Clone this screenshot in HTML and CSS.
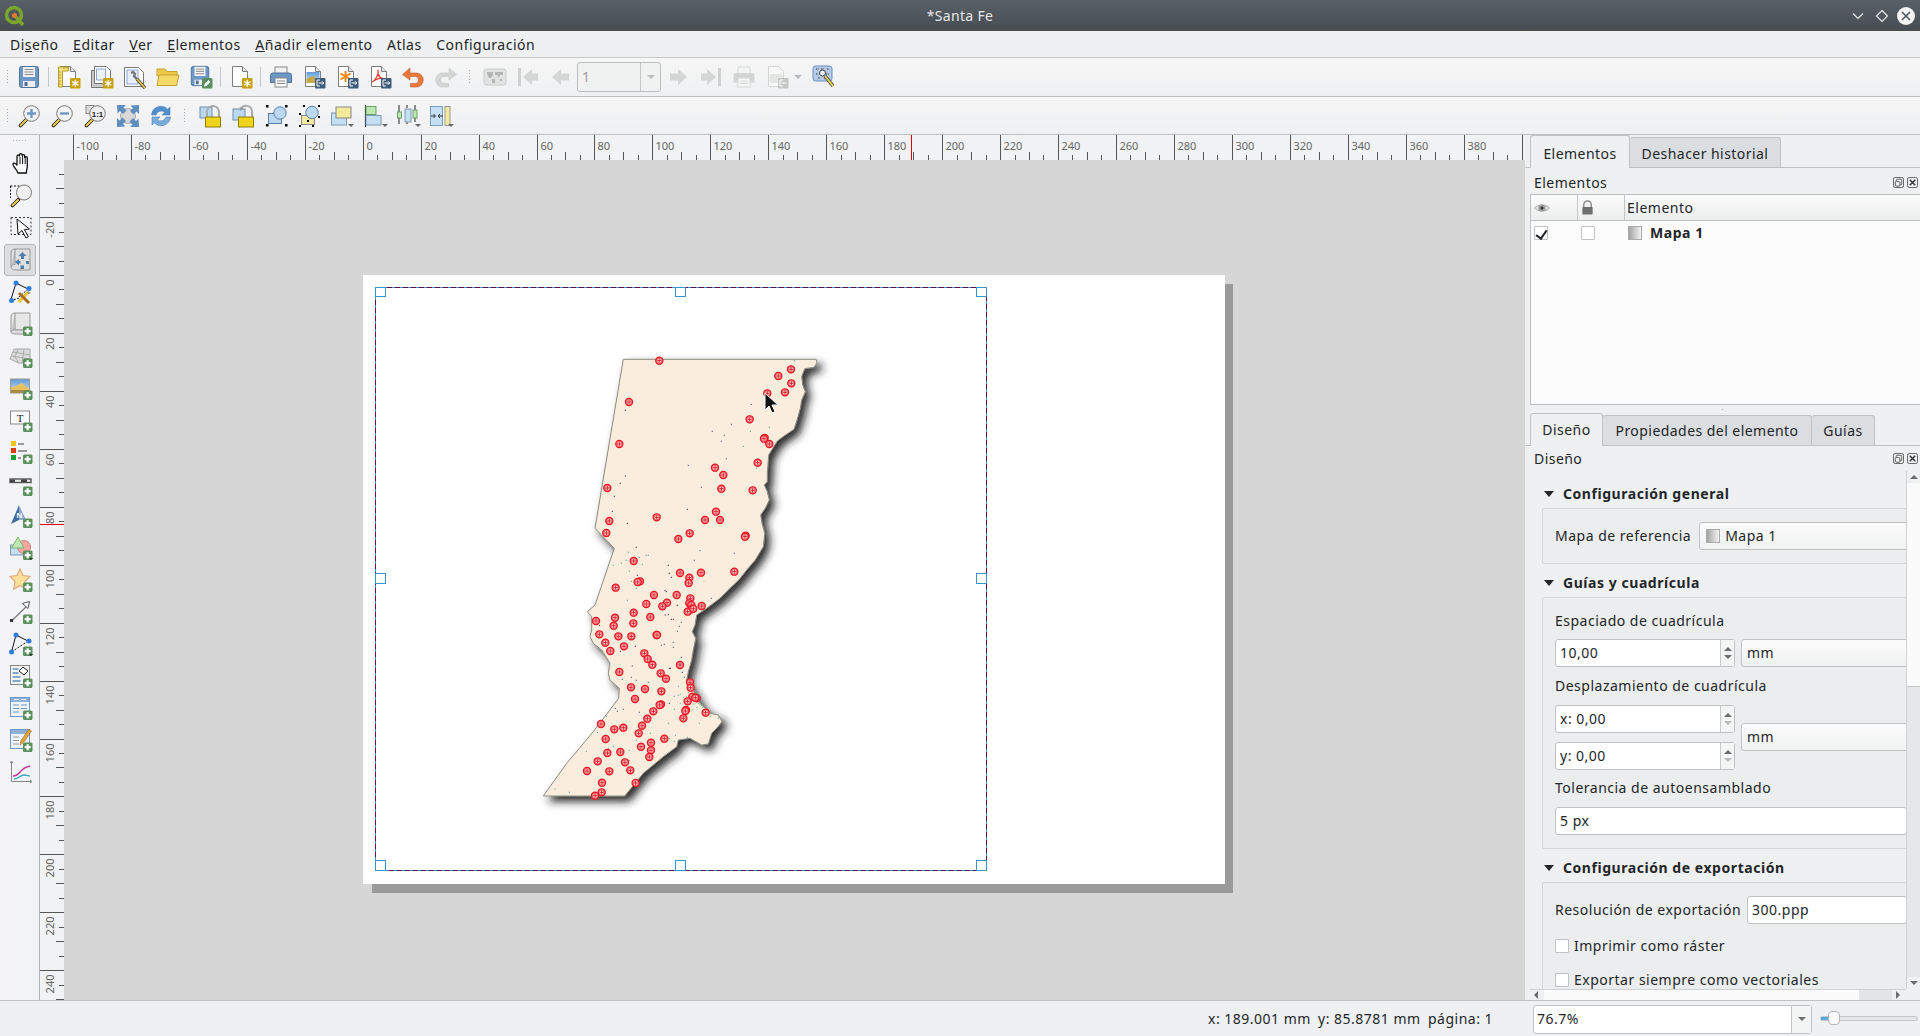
FILE: index.html
```html
<!DOCTYPE html>
<html lang="es">
<head>
<meta charset="utf-8">
<title>*Santa Fe</title>
<link rel="stylesheet" href="styles.css">
</head>
<body>
<svg class="defs" aria-hidden="true">
<defs>
<linearGradient id="g-map" x1="0" x2="1" y1="0" y2="0"><stop offset="0" stop-color="#a0a0a0"/><stop offset="1" stop-color="#f6f6f6"/></linearGradient>
<linearGradient id="g-sky" x1="0" x2="0" y1="0" y2="1"><stop offset="0" stop-color="#5f9bd8"/><stop offset="1" stop-color="#cfe0f0"/></linearGradient>
<filter id="mapshadow" x="-20%" y="-20%" width="140%" height="140%"><feDropShadow dx="5" dy="5" stdDeviation="4.500" flood-color="#1c1c1c" flood-opacity=".95"/></filter>
<g id="b-plus"><rect x="14" y="14.5" width="9.5" height="9.5" rx="1.5" fill="#5b8f5e"/><path d="M18.7 16.2v6M15.7 19.2h6" stroke="#fff" stroke-width="2.2"/></g>
<g id="b-star"><rect x="13" y="13" width="10.5" height="10.5" rx="1" fill="#c8a110"/><path d="M18.2 14.7v7.2M15 16.4l6.4 3.8M21.4 16.4l-6.4 3.8" stroke="#fff" stroke-width="1.2"/></g>
<g id="b-exp"><rect x="13" y="13" width="10.5" height="10.5" rx="1" fill="#3f5d78"/><path d="M18 15h-3v6h3M16.5 18h5M20 16.3l1.7 1.7-1.7 1.7" fill="none" stroke="#fff" stroke-width="1"/></g>
<g id="s-page"><path d="M3.5 1.5h10l5 5v15h-15z" fill="#fff" stroke="#7e7e7e"/><path d="M13.5 1.5v5h5" fill="#e4e4e4" stroke="#7e7e7e"/></g>
<g id="s-handle"><path d="M9.5 15.5l-6 6" stroke="#222" stroke-width="3.6" stroke-linecap="round"/><path d="M9 16l-5.4 5.4" stroke="#f0d050" stroke-width="2" stroke-linecap="round"/></g>
<symbol id="i-save" viewBox="0 0 24 24"><rect x="2.5" y="1.5" width="19" height="21" rx="2" fill="#6d97c4" stroke="#4c739c"/><rect x="6" y="2" width="12" height="10" fill="#f2f2f2"/><path d="M7.5 4.5h9M7.5 7h9M7.5 9.500h9" stroke="#8a8a8a"/><rect x="6" y="16" width="12" height="6" fill="#ececec"/><rect x="7.500" y="17" width="3" height="4" fill="#4d6f92"/></symbol>
<symbol id="i-saveas" viewBox="0 0 24 24"><use href="#i-save" width="22" height="22"/><rect x="13" y="13" width="10.500" height="10.500" rx="1.500" fill="#5b8f5e"/><path d="M15 21.500l.6-2.400 4-4 1.800 1.800-4 4z" fill="#fff"/></symbol>
<symbol id="i-newlayout" viewBox="0 0 24 24"><use href="#s-page"/><path d="M1.500 2h10v4h-6v16h-4z" fill="#f6e27a" stroke="#b39a30"/><path d="M2 7h2M2 10h2M2 13h2M2 16h2M2 19h2M7 2v2M10 2v2" stroke="#b39a30"/><use href="#b-star"/></symbol>
<symbol id="i-dup" viewBox="0 0 24 24"><path d="M1.500 5.500h17v17h-17z" fill="#c9c9c9" stroke="#777"/><path d="M4.500 1.500h12l4 4v13h-16z" fill="#fff" stroke="#777"/><path d="M6.500 4h9v11h-9z" fill="#eef2fa" stroke="#8ba4d0"/><use href="#b-star"/></symbol>
<symbol id="i-manager" viewBox="0 0 24 24"><path d="M1.500 2.500h14l5 5v14h-19z" fill="#fff" stroke="#777"/><path d="M4 5h11v14H4z" fill="#e8eefa" stroke="#8ba4d0"/><path d="M8 8l2-1 2 2-1 2 9 10" fill="none" stroke="#777" stroke-width="2.400"/><path d="M14 14l8 9" stroke="#333" stroke-width="3.200"/><path d="M14 14l8 9" stroke="#efcf4a" stroke-width="1.800"/></symbol>
<symbol id="i-open" viewBox="0 0 24 24"><path d="M1 4h8l2 2.500h10V11H1z" fill="#f0c84a" stroke="#c8a030"/><path d="M1 20.500L3 10h20l-2.500 10.500z" fill="#f7d968" stroke="#c8a030"/></symbol>
<symbol id="i-new" viewBox="0 0 24 24"><use href="#s-page"/><use href="#b-star"/></symbol>
<symbol id="i-print" viewBox="0 0 24 24"><rect x="6" y="2" width="12" height="7" fill="#f2f2f2" stroke="#888"/><path d="M4 8h16a2.500 2.500 0 0 1 2.500 2.500v7H1.500v-7A2.500 2.500 0 0 1 4 8z" fill="#6d97c4" stroke="#4c739c"/><rect x="6" y="13" width="12" height="9" fill="#fafafa" stroke="#888"/><path d="M8 16h8M8 18.500h8" stroke="#888"/></symbol>
<symbol id="i-ximg" viewBox="0 0 24 24"><use href="#s-page"/><rect x="4.500" y="7" width="13" height="11" fill="url(#g-sky)"/><path d="M4.500 18v-4l6-3 7 4v3z" fill="#c7a84a"/><use href="#b-exp"/></symbol>
<symbol id="i-xsvg" viewBox="0 0 24 24"><use href="#s-page"/><path d="M10.500 6v11M5.500 8.500l10 6M15.500 8.500l-10 6" stroke="#f08a1c" stroke-width="2"/><use href="#b-exp"/></symbol>
<symbol id="i-xpdf" viewBox="0 0 24 24"><use href="#s-page"/><path d="M10 5c1 4-2 10-6 12 4-3 10-5 12-3-3 1-7-4-6-9z" fill="none" stroke="#e23b2e" stroke-width="1.300"/><use href="#b-exp"/></symbol>
<symbol id="i-undo" viewBox="0 0 24 24"><path d="M9 3L1.500 9.500 9 15v-3.500h5a3.500 3.500 0 0 1 0 7H9.500V22H15a7 7 0 0 0 .5-14H9z" fill="#e9773b" stroke="#b9602f" stroke-width=".6"/></symbol>
<symbol id="i-redo" viewBox="0 0 24 24"><path d="M15 3l7.500 6.500L15 15v-3.500h-5a3.500 3.500 0 0 0 0 7h4.500V22H9A7 7 0 0 1 8.500 8H15z" fill="#d4d6d6" stroke="#c4c6c6" stroke-width=".6"/></symbol>
<symbol id="i-atlas" viewBox="0 0 24 24"><rect x="1" y="4" width="22" height="16" rx="2.500" fill="#e1e2e2" stroke="#c9caca"/><path d="M4 7h6v3l-2 3H6L4 9zM12 7h8v3h-3l-1 3-2-3h-2zM9 14h3v4H9zM17 14h2v2h-2z" fill="#b4b6b6"/></symbol>
<symbol id="i-first" viewBox="0 0 24 24"><path d="M2 3h3v18H2z" fill="#cfd1d1"/><path d="M7 12l9-8v4.500h6v7h-6V20z" fill="#d4d6d6"/></symbol>
<symbol id="i-prev" viewBox="0 0 24 24"><path d="M3 12l9-8v4.500h8v7h-8V20z" fill="#d4d6d6"/></symbol>
<symbol id="i-next" viewBox="0 0 24 24"><path d="M21 12l-9-8v4.500H4v7h8V20z" fill="#d4d6d6"/></symbol>
<symbol id="i-last" viewBox="0 0 24 24"><path d="M22 3h-3v18h3z" fill="#cfd1d1"/><path d="M17 12L8 4v4.500H2v7h6V20z" fill="#d4d6d6"/></symbol>
<symbol id="i-printd" viewBox="0 0 24 24"><rect x="6" y="2" width="12" height="7" fill="#f6f6f6" stroke="#d4d6d6"/><path d="M4 8h16a2.500 2.500 0 0 1 2.500 2.500v7H1.500v-7A2.500 2.500 0 0 1 4 8z" fill="#d4d6d6"/><rect x="6" y="13" width="12" height="9" fill="#f8f8f8" stroke="#d4d6d6"/><path d="M8 16h8M8 18.500h8" stroke="#d4d6d6"/></symbol>
<symbol id="i-ximgd" viewBox="0 0 24 24"><path d="M3.500 1.500h10l5 5v15h-15z" fill="#f8f8f8" stroke="#d4d6d6"/><rect x="4.500" y="9" width="13" height="9" fill="#e4e6e4"/><rect x="13" y="13" width="10.500" height="10.500" rx="1" fill="#c4c6c6"/><path d="M18 15h-3v6h3M16.500 18h5" fill="none" stroke="#fff"/></symbol>
<symbol id="i-atset" viewBox="0 0 24 24"><rect x="1" y="1" width="19" height="15" rx="2.500" fill="#b4cae8" stroke="#6d8fbe"/><path d="M4 4h3M9 4h3M15 4h2M4 9h2M14 9h3M6 13h2M12 13h3" stroke="#333" stroke-dasharray="1.500 1"/><circle cx="10.500" cy="8" r="3" fill="#eee" stroke="#444"/><path d="M13 11l8 10" stroke="#444" stroke-width="3.600"/><path d="M13 11l8 10" stroke="#f0d050" stroke-width="2"/></symbol>
<symbol id="i-zin" viewBox="0 0 24 24"><use href="#s-handle"/><circle cx="14.500" cy="9.500" r="7.800" fill="#f3f3f3" stroke="#777"/><path d="M14.500 5v9M10 9.500h9" stroke="#6d97c4" stroke-width="2.400"/></symbol>
<symbol id="i-zout" viewBox="0 0 24 24"><use href="#s-handle"/><circle cx="14.500" cy="9.500" r="7.800" fill="#f3f3f3" stroke="#777"/><path d="M10 9.500h9" stroke="#6d97c4" stroke-width="2.400"/></symbol>
<symbol id="i-z11" viewBox="0 0 24 24"><rect x="3" y="1.500" width="8" height="8" fill="#ddd" stroke="#888"/><use href="#s-handle"/><circle cx="14.500" cy="9.500" r="7.800" fill="#f0f0f0" stroke="#777"/><text class="sym-t" x="14.500" y="12.500">1:1</text></symbol>
<symbol id="i-zfull" viewBox="0 0 24 24"><circle cx="12" cy="12" r="7.500" fill="#d8d8d8" stroke="#aaa"/><path d="M1 1h9L7.500 3.500l3 3-3.500 3.500-3-3L1.500 9.500zM23 1v9l-2.500-2.500-3 3L14 7l3-3L14.500 1.500zM1 23v-9l2.500 2.500 3-3L10 17l-3 3 2.500 2.500zM23 23h-9l2.500-2.500-3-3L17 14l3 3 2.500-2.500z" fill="#5f8dc0"/></symbol>
<symbol id="i-refresh" viewBox="0 0 24 24"><path d="M2.500 11A9.500 9.500 0 0 1 18.800 5.200L21 3v8h-8l2.700-2.700A5.500 5.500 0 0 0 7 11z" fill="#4f8fce" stroke="#3e76ae" stroke-width=".5"/><path d="M21.500 13A9.500 9.500 0 0 1 5.200 18.800L3 21v-8h8l-2.700 2.700A5.500 5.500 0 0 0 17 13z" fill="#79acdc" stroke="#3e76ae" stroke-width=".5"/></symbol>
<symbol id="i-lock" viewBox="0 0 24 24"><rect x="1" y="3" width="12" height="11" fill="#bcd8f0" stroke="#6d8fae"/><path d="M8 14V8a6 6 0 0 1 12 0v6" fill="none" stroke="#aaa" stroke-width="2"/><rect x="6.500" y="13" width="15" height="10" fill="#efd41c" stroke="#8f7f10"/></symbol>
<symbol id="i-unlock" viewBox="0 0 24 24"><rect x="1" y="5" width="12" height="11" fill="#bcd8f0" stroke="#6d8fae"/><path d="M20 13V7a6 6 0 0 0-11-2.500" fill="none" stroke="#aaa" stroke-width="2"/><path d="M7.500 3l1 4 3-2.500z" fill="#999"/><rect x="6.500" y="13" width="15" height="10" fill="#efd41c" stroke="#8f7f10"/></symbol>
<symbol id="i-group" viewBox="0 0 24 24"><rect x="3.500" y="9.500" width="13" height="10" fill="#bcd8f0" stroke="#5a7ea4"/><circle cx="15" cy="9" r="6.200" fill="#bcd8f0" stroke="#5a7ea4"/><path d="M1 1h2.500v2.500H1zM20 1h2.500v2.500H20zM1 20h2.500v2.500H1zM20 20h2.500v2.500H20z" fill="#000"/></symbol>
<symbol id="i-ungroup" viewBox="0 0 24 24"><rect x="3.500" y="11.500" width="13" height="9" fill="#f3e9a0" stroke="#888"/><circle cx="14" cy="8.500" r="6.200" fill="#bcd8f0" stroke="#5a7ea4"/><path d="M1 9h2v2H1zM5 1h2v2H5zM20 1h2v2h-2zM20 12h2v2h-2zM1 21h2v2H1zM14 21h2v2h-2zM9 16h2v2H9z" fill="#000"/></symbol>
<symbol id="i-raise" viewBox="0 0 24 24"><rect x=".5" y="9" width="15" height="12" fill="#c4def2" stroke="#7c9cb8"/><rect x="5" y="3" width="15" height="11" fill="#f3ea9c" stroke="#888"/><path d="M17 20h6l-3 3z" fill="#666"/></symbol>
<symbol id="i-align" viewBox="0 0 24 24"><path d="M1.500 1v22" stroke="#222" stroke-width="1.200"/><rect x="2" y="2.500" width="10" height="8" fill="#bfe8b0" stroke="#6aa06a"/><rect x="2" y="11.500" width="15" height="9.500" fill="#c4def2" stroke="#7c9cb8"/><path d="M18 20h6l-3 3z" fill="#666"/></symbol>
<symbol id="i-dist" viewBox="0 0 24 24"><path d="M2 1v7M2 14v6M10 1v3M10 18v2M18 1v5M18 14v4" stroke="#222"/><rect x=".5" y="8" width="4" height="6" fill="#bfe8b0" stroke="#6aa06a"/><rect x="8" y="5" width="6" height="13" fill="#c4def2" stroke="#7c9cb8"/><rect x="16" y="6" width="4" height="8" fill="#bfe8b0" stroke="#6aa06a"/><path d="M18 20h6l-3 3z" fill="#666"/></symbol>
<symbol id="i-resize" viewBox="0 0 24 24"><rect x=".5" y="2.500" width="12" height="19" fill="#c4def2" stroke="#7c9cb8"/><rect x="15" y="2.500" width="5" height="19" fill="#f3ea9c" stroke="#999"/><path d="M1 12h4M3.500 10l2 2-2 2M13 12H8M10 10l-2 2 2 2" fill="none" stroke="#333"/><path d="M18 20h6l-3 3z" fill="#666"/></symbol>
<symbol id="i-hand" viewBox="0 0 24 24"><g transform="translate(2 0)"><path d="M6.500 20c-1-3-5-6-4.500-8s3-.5 4 1.500V4.500c0-2 2.500-2 2.500 0V3c0-1.800 2.600-1.800 2.600 0v1c0-1.800 2.600-1.800 2.600 0v2c0-1.800 2.600-1.800 2.600 0v8c0 3-1 4-1 7H7z" fill="#fff" stroke="#111" stroke-width="1.300"/><path d="M9 5v7M11.600 4v8M14.200 5v7" stroke="#111"/></g></symbol>
<symbol id="i-zoomsel" viewBox="0 0 24 24"><path d="M1.500 2h11M1.500 2v12" stroke="#111" stroke-dasharray="2 1.500" fill="none"/><use href="#s-handle"/><circle cx="15" cy="8.500" r="7.500" fill="#f0f0f0" stroke="#777"/></symbol>
<symbol id="i-select" viewBox="0 0 24 24"><rect x="2" y="1.500" width="20" height="17" fill="none" stroke="#333" stroke-dasharray="2 2"/><path d="M8 3l1 15 4-3.500 4 7.500 2.400-1.300-4-7 5-.7z" fill="#fff" stroke="#111"/></symbol>
<symbol id="i-move" viewBox="0 0 24 24"><path d="M6 1h15v21H6c-2 0-4-1-4-3V4c0-2 2-3 4-3z" fill="#dedede" stroke="#999"/><path d="M2 19c0-2 2-2.500 4-2.500V1" fill="#c4c4c4" stroke="#999"/><path d="M13.500 4l4 4h-2.500v3h-3V8h-2.500zM6 14l4-3v2h1.500v2.500H10v2zM11.500 17.500h3.500V21h-3.500zM17 13h3v3h-3z" fill="#4f7fb0"/></symbol>
<symbol id="i-editn" viewBox="0 0 24 24"><path d="M7 3L1.500 21M7 3l12 6" stroke="#111" fill="none"/><path d="M19 9L10 17M1.500 21l9-3" stroke="#111" stroke-dasharray="2 1.500" fill="none"/><circle cx="7" cy="3" r="2.500" fill="#2f7de0"/><circle cx="20" cy="8.500" r="2.500" fill="#2f7de0"/><circle cx="2.500" cy="20.500" r="2.500" fill="#2f7de0"/><path d="M10 22l9-10" stroke="#e9c530" stroke-width="3"/><path d="M10 13l10 10" stroke="#a96c28" stroke-width="3"/><path d="M18 10l4 3-3 1.500z" fill="#999"/></symbol>
<symbol id="i-addmap" viewBox="0 0 24 24"><path d="M6 1h15v17H6c-2 0-4 1-4 2V4c0-2 2-3 4-3z" fill="#e6e6e6" stroke="#999"/><path d="M2 20c0-1 2-3 4-3V1" fill="#ccc" stroke="#999"/><path d="M2 20c0 1 2 2 4 2h9v-4H6" fill="#ddd" stroke="#999"/><use href="#b-plus"/></symbol>
<symbol id="i-add3d" viewBox="0 0 24 24"><path d="M1 15l4-10h16v14H10z" fill="#dcdcdc" stroke="#aaa"/><path d="M4 8l17 3M2.500 12l18 3M9 5l-3 8 4 6M15 5l-2 14" stroke="#aaa" fill="none"/><use href="#b-plus"/></symbol>
<symbol id="i-addpic" viewBox="0 0 24 24"><rect x="1.500" y="3" width="19" height="14" fill="url(#g-sky)" stroke="#999"/><path d="M2 17v-6c5 0 8-3 11-4l7 6v4z" fill="#e8c25e"/><path d="M2 14h18v3H2z" fill="#a48c48"/><use href="#b-plus"/></symbol>
<symbol id="i-addtxt" viewBox="0 0 24 24"><rect x="1.500" y="3" width="19" height="13" fill="#fafafa" stroke="#888"/><text class="sym-tt" x="11" y="14">T</text><use href="#b-plus"/></symbol>
<symbol id="i-addleg" viewBox="0 0 24 24"><rect x="2" y="1" width="5" height="5" fill="#f3c616"/><rect x="2" y="8" width="5" height="5" fill="#e03a10"/><rect x="2" y="15" width="5" height="5" fill="#1f9e3c"/><path d="M9 4h6M9 11h9M9 18h3" stroke="#999" stroke-width="2"/><use href="#b-plus"/></symbol>
<symbol id="i-addsb" viewBox="0 0 24 24"><rect x="1" y="7" width="21" height="3.500" fill="#eee" stroke="#555" stroke-width="1.400"/><path d="M1 8.800h5M12 8.800h6" stroke="#444" stroke-width="2.600"/><use href="#b-plus"/></symbol>
<symbol id="i-addn" viewBox="0 0 24 24"><path d="M10 1L2 20l8-4z" fill="#3f6da3"/><path d="M10 1l7 15-7 0z" fill="#8aabd0"/><text class="sym-n" x="10.500" y="14">N</text><use href="#b-plus"/></symbol>
<symbol id="i-addshp" viewBox="0 0 24 24"><rect x="1.500" y="9" width="16" height="10" fill="#c4def2" stroke="#7c9cb8"/><circle cx="15" cy="11" r="6.500" fill="#f4a8a0" stroke="#cf8078"/><path d="M9 1l6 11H2.500z" fill="#bfe8b0" stroke="#78b078"/><use href="#b-plus"/><path d="M20 22h4l-2 2z" fill="#333"/></symbol>
<symbol id="i-addstar" viewBox="0 0 24 24"><path d="M11 1l3 6.500 7 1-5 5 1.300 7.500L11 17.500 4.700 21 6 13.500l-5-5 7-1z" fill="#fbe09a" stroke="#e0a878" stroke-width="1.200"/><use href="#b-plus"/></symbol>
<symbol id="i-addarr" viewBox="0 0 24 24"><path d="M2.500 21L18 6" stroke="#777" stroke-width="1.200"/><rect x="1" y="19" width="3" height="3" fill="#333"/><path d="M20.500 1.500l-7 2 5.500 5z" fill="#fff" stroke="#555"/><use href="#b-plus"/></symbol>
<symbol id="i-addnod" viewBox="0 0 24 24"><path d="M7 3L2.500 20M7 3l12 6" stroke="#111" fill="none"/><path d="M19 9L2.500 20" stroke="#111" stroke-dasharray="2 1.500" fill="none"/><circle cx="7" cy="3" r="2.500" fill="#2f7de0"/><circle cx="20" cy="9" r="2.500" fill="#2f7de0"/><circle cx="2.500" cy="20" r="2.500" fill="#2f7de0"/><use href="#b-plus"/><path d="M20 22h4l-2 2z" fill="#333"/></symbol>
<symbol id="i-addhtml" viewBox="0 0 24 24"><rect x="1.500" y="1.500" width="19" height="19" fill="#f4f4f4" stroke="#888"/><path d="M3.500 5h6M3.500 9h6M3.500 13h8M3.500 17h8" stroke="#5f8dc0" stroke-width="1.600"/><path d="M10 7l4-4 5 4-4 4z" fill="#fff" stroke="#222"/><use href="#b-plus"/></symbol>
<symbol id="i-addtbl" viewBox="0 0 24 24"><rect x="1.500" y="1.500" width="19" height="19" fill="#eef3fa" stroke="#6d97c4"/><rect x="2" y="2" width="18" height="4" fill="#8fb0d8"/><path d="M5 3.500h5M12 3.500h5" stroke="#eef3fa" /><path d="M4 9h6M12 9h6M4 12.500h6M12 12.500h6M4 16h6" stroke="#6d97c4"/><use href="#b-plus"/></symbol>
<symbol id="i-addfix" viewBox="0 0 24 24"><rect x="1.500" y="1.500" width="19" height="19" fill="#eef3fa" stroke="#6d97c4"/><rect x="2" y="2" width="18" height="4" fill="#8fb0d8"/><path d="M4 9h6M4 12.500h6M4 16h6" stroke="#999"/><path d="M20 1l2.500 2-7.500 11-4 3 1-4.500z" fill="#e8a23c" stroke="#9a6a28" stroke-width=".6"/><use href="#b-plus"/></symbol>
<symbol id="i-addchart" viewBox="0 0 24 24"><path d="M2.500 1v20.500H23" fill="none" stroke="#888"/><path d="M1 3l1.500-2L4 3M21 20l2 1.500-2 1.500" fill="none" stroke="#888"/><path d="M4 16c5 0 6-3 9-6s5-3 8-4" fill="none" stroke="#c0359a" stroke-width="1.500"/><path d="M5 19c5 0 6-4 10-4 3 0 4 1 6 1" fill="none" stroke="#38a8c0" stroke-width="1.300"/></symbol>
<symbol id="i-eye" viewBox="0 0 16 16"><path d="M.5 8C3 4 13 4 15.500 8 13 12 3 12 .5 8z" fill="#ddd" stroke="#aaa"/><circle cx="8" cy="8" r="3.500" fill="#999"/><circle cx="8" cy="8" r="1.500" fill="#333"/></symbol>
<symbol id="i-padlock" viewBox="0 0 16 16"><path d="M4 8V5a4 4 0 0 1 8 0v3" fill="none" stroke="#888" stroke-width="1.500"/><rect x="2.500" y="7.500" width="11" height="8" rx="1" fill="#6e6e6e"/></symbol>
<symbol id="i-mapitem" viewBox="0 0 14 14"><rect x=".5" y=".5" width="13" height="13" fill="url(#g-map)" stroke="#aaa"/></symbol>
<symbol id="i-float" viewBox="0 0 12 12"><rect x=".5" y=".5" width="11" height="11" rx="2" fill="none" stroke="#555"/><rect x="3.500" y="2.500" width="6" height="6" rx="1" fill="none" stroke="#555"/><rect x="2.500" y="5" width="5" height="5" rx="1" fill="#eff0f1" stroke="#555"/></symbol>
<symbol id="i-close" viewBox="0 0 12 12"><rect x=".5" y=".5" width="11" height="11" rx="2" fill="none" stroke="#555"/><path d="M3 3l6 6M9 3l-6 6" stroke="#333" stroke-width="1.600"/></symbol>
</defs>
</svg>

<header class="titlebar">
  <svg class="logo" viewBox="0 0 22 22"><circle cx="10" cy="10" r="7.500" fill="none" stroke="#7aa62c" stroke-width="3.500"/><path d="M12 12l7 8" stroke="#7aa62c" stroke-width="3.500"/><circle cx="10.500" cy="10.500" r="2.500" fill="#e8792a"/></svg>
  <span class="wintitle">*Santa Fe</span>
  <div class="winbtns">
    <svg class="wb" viewBox="0 0 14 14"><path d="M2 4.500l5 5 5-5" fill="none" stroke="#e8e8e8" stroke-width="1.200"/></svg>
    <svg class="wb" viewBox="0 0 14 14"><path d="M7 1.500L12.500 7 7 12.500 1.500 7z" fill="none" stroke="#e8e8e8" stroke-width="1.200"/></svg>
    <svg class="wb wb-close" viewBox="0 0 18 18"><circle cx="9" cy="9" r="9" fill="#f4f4f4"/><path d="M5 5l8 8M13 5l-8 8" stroke="#4a5157" stroke-width="1.500"/></svg>
  </div>
</header>

<nav class="menubar">
  <span class="mi">Di<u>s</u>eño</span><span class="mi"><u>E</u>ditar</span><span class="mi"><u>V</u>er</span><span class="mi"><u>E</u>lementos</span><span class="mi"><u>A</u>ñadir elemento</span><span class="mi">Atlas</span><span class="mi">Configuración</span>
</nav>

<div class="toolbar tb-one">
  <i class="grip"></i>
  <span class="tb"><svg class="ic"><use href="#i-save"/></svg></span><i class="sep"></i>
  <span class="tb"><svg class="ic"><use href="#i-newlayout"/></svg></span>
  <span class="tb"><svg class="ic"><use href="#i-dup"/></svg></span>
  <span class="tb"><svg class="ic"><use href="#i-manager"/></svg></span>
  <span class="tb"><svg class="ic"><use href="#i-open"/></svg></span>
  <span class="tb"><svg class="ic"><use href="#i-saveas"/></svg></span><i class="sep"></i>
  <span class="tb"><svg class="ic"><use href="#i-new"/></svg></span><i class="sep"></i>
  <span class="tb"><svg class="ic"><use href="#i-print"/></svg></span>
  <span class="tb"><svg class="ic"><use href="#i-ximg"/></svg></span>
  <span class="tb"><svg class="ic"><use href="#i-xsvg"/></svg></span>
  <span class="tb"><svg class="ic"><use href="#i-xpdf"/></svg></span>
  <span class="tb"><svg class="ic"><use href="#i-undo"/></svg></span>
  <span class="tb"><svg class="ic"><use href="#i-redo"/></svg></span>
  <i class="grip grip-mid"></i>
  <span class="tb"><svg class="ic"><use href="#i-atlas"/></svg></span>
  <span class="tb"><svg class="ic"><use href="#i-first"/></svg></span>
  <span class="tb"><svg class="ic"><use href="#i-prev"/></svg></span>
  <div class="pagecombo"><span class="pagecombo-val">1</span><span class="pagecombo-arrow"><i class="tri tri-d tri-light"></i></span></div>
  <span class="tb"><svg class="ic"><use href="#i-next"/></svg></span>
  <span class="tb"><svg class="ic"><use href="#i-last"/></svg></span>
  <span class="tb"><svg class="ic"><use href="#i-printd"/></svg></span>
  <span class="tb"><svg class="ic"><use href="#i-ximgd"/></svg></span><i class="tri tri-d tri-light tb-drop"></i>
  <span class="tb"><svg class="ic"><use href="#i-atset"/></svg></span>
</div>

<div class="toolbar tb-two">
  <i class="grip"></i>
  <span class="tb"><svg class="ic"><use href="#i-zin"/></svg></span>
  <span class="tb"><svg class="ic"><use href="#i-zout"/></svg></span>
  <span class="tb"><svg class="ic"><use href="#i-z11"/></svg></span>
  <span class="tb"><svg class="ic"><use href="#i-zfull"/></svg></span>
  <span class="tb"><svg class="ic"><use href="#i-refresh"/></svg></span>
  <i class="grip grip-two"></i>
  <span class="tb"><svg class="ic"><use href="#i-lock"/></svg></span>
  <span class="tb"><svg class="ic"><use href="#i-unlock"/></svg></span>
  <span class="tb"><svg class="ic"><use href="#i-group"/></svg></span>
  <span class="tb"><svg class="ic"><use href="#i-ungroup"/></svg></span>
  <span class="tb"><svg class="ic"><use href="#i-raise"/></svg></span>
  <span class="tb"><svg class="ic"><use href="#i-align"/></svg></span>
  <span class="tb"><svg class="ic"><use href="#i-dist"/></svg></span>
  <span class="tb"><svg class="ic"><use href="#i-resize"/></svg></span>
</div>

<main class="workspace">
  <aside class="lefttools">
    <i class="grip-h"></i>
    <span class="lt"><svg class="ic"><use href="#i-hand"/></svg></span>
    <span class="lt"><svg class="ic"><use href="#i-zoomsel"/></svg></span>
    <span class="lt"><svg class="ic"><use href="#i-select"/></svg></span>
    <span class="lt lt-on"><svg class="ic"><use href="#i-move"/></svg></span>
    <span class="lt"><svg class="ic"><use href="#i-editn"/></svg></span>
    <span class="lt"><svg class="ic"><use href="#i-addmap"/></svg></span>
    <span class="lt"><svg class="ic"><use href="#i-add3d"/></svg></span>
    <span class="lt"><svg class="ic"><use href="#i-addpic"/></svg></span>
    <span class="lt"><svg class="ic"><use href="#i-addtxt"/></svg></span>
    <span class="lt"><svg class="ic"><use href="#i-addleg"/></svg></span>
    <span class="lt"><svg class="ic"><use href="#i-addsb"/></svg></span>
    <span class="lt"><svg class="ic"><use href="#i-addn"/></svg></span>
    <span class="lt"><svg class="ic"><use href="#i-addshp"/></svg></span>
    <span class="lt"><svg class="ic"><use href="#i-addstar"/></svg></span>
    <span class="lt"><svg class="ic"><use href="#i-addarr"/></svg></span>
    <span class="lt"><svg class="ic"><use href="#i-addnod"/></svg></span>
    <span class="lt"><svg class="ic"><use href="#i-addhtml"/></svg></span>
    <span class="lt"><svg class="ic"><use href="#i-addtbl"/></svg></span>
    <span class="lt"><svg class="ic"><use href="#i-addfix"/></svg></span>
    <span class="lt"><svg class="ic"><use href="#i-addchart"/></svg></span>
  </aside>

  <section class="viewport">
    <svg id="hruler" class="hruler" viewBox="40 135 1485 25"></svg>
    <div class="viewrow">
      <svg id="vruler" class="vruler" viewBox="40 160 24 840"></svg>
      <div class="canvas">
        <svg id="sheet" class="sheet" viewBox="64 160 1460 840">
          <rect x="372" y="284" width="861" height="609" fill="#9a9a9a"/>
          <rect x="363" y="275" width="862" height="609" fill="#fff"/>
          <g id="mapgroup"></g>
          <rect class="frame-base" x="375.500" y="287.500" width="611" height="583"/>
          <rect class="frame" x="375.500" y="287.500" width="611" height="583"/>
          <g class="handles">
            <rect x="375.500" y="287.500" width="10" height="9"/><rect x="675.500" y="287.500" width="10" height="9"/><rect x="976.500" y="287.500" width="10" height="9"/>
            <rect x="375.500" y="573.500" width="10" height="10"/><rect x="976.500" y="573.500" width="10" height="10"/>
            <rect x="375.500" y="860.500" width="10" height="10"/><rect x="675.500" y="860.500" width="10" height="10"/><rect x="976.500" y="860.500" width="10" height="10"/>
          </g>
          <path d="M765 393v17l4-4 3 7 3-1.500-3-6.500h6z" fill="#111" stroke="#fff" stroke-width="1"/>
        </svg>
      </div>
    </div>
  </section>

  <aside class="rightpanel">
    <div class="tabs">
      <span class="tab tab-on tab-a1">Elementos</span><span class="tab tab-a2">Deshacer historial</span>
    </div>
    <div class="docktitle"><span>Elementos</span><span class="dockbtns"><svg class="db"><use href="#i-float"/></svg><svg class="db"><use href="#i-close"/></svg></span></div>
    <div class="itemtable">
      <div class="thead">
        <span class="th th-ic"><svg class="ic16"><use href="#i-eye"/></svg></span>
        <span class="th th-ic"><svg class="ic16 ic-lock"><use href="#i-padlock"/></svg></span>
        <span class="th th-name">Elemento</span>
      </div>
      <div class="trow">
        <span class="td-ic"><i class="check check-on"></i></span>
        <span class="td-ic"><i class="check"></i></span>
        <span class="td-name"><svg class="ic14"><use href="#i-mapitem"/></svg><b>Mapa 1</b></span>
      </div>
    </div>
    <div class="vsplit"></div>
    <div class="tabs tabs-two">
      <span class="tab tab-on tab-b1">Diseño</span><span class="tab tab-b2">Propiedades del elemento</span><span class="tab tab-b3">Guías</span>
    </div>
    <div class="docktitle dt-two"><span>Diseño</span><span class="dockbtns"><svg class="db"><use href="#i-float"/></svg><svg class="db"><use href="#i-close"/></svg></span></div>
    <div class="scrollarea">
      <div class="scrollmain">
        <div class="scrollcontent">
          <div class="sec-h sec-first"><i class="tri tri-d tri-sec"></i>Configuración general</div>
          <div class="grp grp-a">
            <div class="frow">
              <label class="lab">Mapa de referencia</label>
              <div class="combo combo-ref"><svg class="ic14 ic-in"><use href="#i-mapitem"/></svg>Mapa 1</div>
            </div>
          </div>
          <div class="sec-h"><i class="tri tri-d tri-sec"></i>Guías y cuadrícula</div>
          <div class="grp grp-b">
            <label class="lab lab-block">Espaciado de cuadrícula</label>
            <div class="frow frow-spin">
              <div class="spin"><span class="spin-v">10,00</span><span class="spin-b"><i class="tri tri-u"></i><i class="tri tri-d"></i></span></div>
              <div class="combo combo-mm">mm</div>
            </div>
            <label class="lab lab-block lab-d">Desplazamiento de cuadrícula</label>
            <div class="frow frow-xy">
              <div class="spincol">
                <div class="spin"><span class="spin-v">x: 0,00</span><span class="spin-b"><i class="tri tri-u"></i><i class="tri tri-d tri-light"></i></span></div>
                <div class="spin"><span class="spin-v">y: 0,00</span><span class="spin-b"><i class="tri tri-u"></i><i class="tri tri-d tri-light"></i></span></div>
              </div>
              <div class="combo combo-mm">mm</div>
            </div>
            <label class="lab lab-block lab-t">Tolerancia de autoensamblado</label>
            <div class="inp inp-full">5 px</div>
          </div>
          <div class="sec-h"><i class="tri tri-d tri-sec"></i>Configuración de exportación</div>
          <div class="grp grp-c">
            <div class="frow">
              <label class="lab">Resolución de exportación</label>
              <div class="inp inp-res">300.ppp</div>
            </div>
            <div class="chk chk-a"><i class="check"></i>Imprimir como ráster</div>
            <div class="chk chk-b"><i class="check"></i>Exportar siempre como vectoriales</div>
          </div>
        </div>
        <div class="vscroll"><i class="tri tri-u tri-sb"></i><span class="vs-thumb"></span><span class="vs-trough"></span><i class="tri tri-d tri-sb"></i></div>
      </div>
      <div class="hscroll"><i class="tri tri-l"></i><span class="hs-thumb"></span><span class="hs-trough"></span><i class="tri tri-r"></i></div>
    </div>
  </aside>
</main>

<footer class="statusbar">
  <span class="st st-x">x: 189.001 mm</span><span class="st st-y">y: 85.8781 mm</span><span class="st st-p">página: 1</span>
  <div class="zoomcombo"><span class="zoomcombo-val">76.7%</span><span class="zoomcombo-arrow"><i class="tri tri-d"></i></span></div>
  <div class="slider"><i class="slider-fill"></i><i class="slider-thumb"></i></div>
</footer>
<script src="app.js"></script>
</body>
</html>
```

FILE: styles.css
```css
* { box-sizing: border-box; }
html, body { margin: 0; padding: 0; }
body {
  width: 1920px; height: 1036px; overflow: hidden;
  display: flex; flex-direction: column;
  background: #eff0f1; color: #232629;
  font-family: "Noto Sans", sans-serif; font-size: 14px; line-height: 20px;
}
i { font-style: normal; display: block; }
.defs { position: absolute; width: 0; height: 0; }
.sym-t { font: 700 8px "Liberation Sans", sans-serif; text-anchor: middle; fill: #222; }
.sym-tt { font: 400 11px "Liberation Serif", serif; text-anchor: middle; fill: #222; }
.sym-n { font: 700 8px "Liberation Sans", sans-serif; text-anchor: middle; fill: #fff; }

/* title bar */
.titlebar {
  flex: 0 0 31px; display: flex; align-items: center; position: relative;
  background: linear-gradient(#596168, #454c52);
}
.logo { width: 22px; height: 22px; margin-left: 4px; }
.wintitle { position: absolute; left: 0; right: 0; text-align: center; color: #e4e6e7; font-size: 14px; letter-spacing: .3px; }
.winbtns { margin-left: auto; display: flex; align-items: center; gap: 10px; padding-right: 5px; }
.wb { width: 14px; height: 14px; display: block; }
.wb-close { width: 18px; height: 18px; margin-left: -2px; }

/* menu */
.menubar {
  flex: 0 0 27px; display: flex; align-items: center; padding: 2px 0 0 10px;
  background: #eff0f1; border-bottom: 1px solid #c8c9ca;
}
.mi { margin-right: 14.500px; letter-spacing: .5px; }

/* toolbars */
.toolbar {
  display: flex; align-items: center; padding-left: 12px;
  background: linear-gradient(#f6f6f7, #eff0f1);
  border-bottom: 1px solid #bdbfc0;
}
.tb-one { flex: 0 0 39px; }
.tb-two { flex: 0 0 38px; }
.tb { flex: 0 0 33px; height: 33px; display: flex; align-items: center; justify-content: center; }
.ic { width: 24px; height: 24px; display: block; }
.sep { flex: 0 0 7px; height: 20px; background: linear-gradient(#c6c7c8, #c6c7c8) center / 1px 100% no-repeat; }
.grip {
  position: absolute; left: 6px; width: 4px; height: 16px;
  background-image: radial-gradient(#aaa 0.7px, transparent 0.8px); background-size: 3px 3px;
}
.grip-mid { position: static; flex: 0 0 4px; margin: 0 6px 0 6px; }
.grip-two { position: static; flex: 0 0 4px; margin: 0 7px 0 6px; }
.pagecombo {
  flex: 0 0 84px; height: 30px; display: flex;
  border: 1px solid #bcbebf; border-radius: 3px; background: #f0f1f1; color: #a99;
}
.pagecombo-val { flex: 1; padding: 4px 4px; }
.pagecombo-arrow { flex: 0 0 20px; border-left: 1px solid #c4c5c6; display: flex; align-items: center; justify-content: center; }
.tb-drop { margin: 0 5px 0 1px; }

/* triangles */
.tri { width: 0; height: 0; border-style: solid; border-color: transparent; }
.tri-d { border-width: 4px 4px 0; border-top-color: #6a6c6e; }
.tri-u { border-width: 0 4px 4px; border-bottom-color: #6a6c6e; }
.tri-l { border-width: 4px 4px 4px 0; border-right-color: #6a6c6e; }
.tri-r { border-width: 4px 0 4px 4px; border-left-color: #6a6c6e; }
.tri-light.tri-d { border-top-color: #b8babb; }
.tri-sec { border-width: 6px 5px 0; border-top-color: #232629; margin-right: 9px; flex: none; }

/* workspace */
.workspace { flex: 0 0 865px; display: flex; min-height: 0; }
.lefttools {
  flex: 0 0 40px; display: flex; flex-direction: column; align-items: center;
  background: linear-gradient(90deg, #f5f5f7, #f1f2f3);
  border-right: 1px solid #b1b2b3;
}
.grip-h {
  flex: 0 0 13px; width: 16px;
  background: radial-gradient(#b4b4b4 0.7px, transparent 0.8px) 0 4px / 3px 3px repeat-x;
}
.lt { flex: 0 0 32px; width: 32px; display: flex; align-items: center; justify-content: center; border: 1px solid transparent; border-radius: 3px; }
.lt .ic { margin-left: 3px; }
.lt-on { background: #dcdedf; border-color: #b6b8b9; }

.viewport { flex: 0 0 1485px; display: flex; flex-direction: column; }
.hruler { flex: 0 0 25px; width: 1485px; height: 25px; display: block; background: #f1f2f3; }
.viewrow { flex: 1; display: flex; min-height: 0; }
.vruler { flex: 0 0 24px; width: 24px; height: 840px; display: block; background: #f1f2f3; }
.canvas { flex: 1; position: relative; background: #d6d6d6; overflow: hidden; }
.sheet { position: absolute; left: 0; top: 0; width: 1460px; height: 840px; }
.rtick { stroke: #555; stroke-width: 1; fill: none; shape-rendering: crispEdges; }
.rlabel { font-family: "Noto Sans", sans-serif; font-size: 11px; fill: #666; }
.rlabel-v { text-anchor: end; }
.rmark { stroke: #e60000; stroke-width: 1; shape-rendering: crispEdges; }
.frame-base { fill: none; stroke: #5a0f3c; stroke-width: 1; shape-rendering: crispEdges; }
.frame { fill: none; stroke: #3d8fc6; stroke-width: 1; stroke-dasharray: 3 5; shape-rendering: crispEdges; }
.handles rect { fill: none; stroke: #3a94cc; stroke-width: 1; shape-rendering: crispEdges; }

/* right panel */
.rightpanel { flex: 0 0 395px; display: flex; flex-direction: column; position: relative; min-width: 0; }
.tabs { flex: 0 0 33px; display: flex; align-items: flex-end; padding-left: 5px; border-bottom: 1px solid #bfc1c2; }
.tabs-two { margin-top: 0; flex: 0 0 32px; }
.tab {
  height: 30px; display: flex; align-items: center; justify-content: center;
  background: #dcdde0; border: 1px solid #bfc1c2; border-bottom: 0; border-left: 0; border-radius: 3px 3px 0 0;
  letter-spacing: .45px; margin-bottom: 0;
}
.tab-on { height: 33px; margin-bottom: -1px; background: #eff0f1; border-left: 1px solid #bfc1c2; position: relative; }
.tab-a1 { width: 100px; padding-top: 3px; } .tab-a2 { width: 151px; padding-top: 3px; }
.tab-b1 { width: 73px; } .tab-b2 { width: 209px; } .tab-b3 { width: 63px; }
.docktitle { flex: 0 0 26px; display: flex; align-items: center; justify-content: space-between; padding: 3px 2px 0 9px; letter-spacing: .45px; }
.dt-two { flex: 0 0 25px; padding-top: 0; }
.dockbtns { display: flex; gap: 3px; }
.db { width: 11px; height: 11px; display: block; }
.itemtable { flex: 0 0 211px; margin-left: 5px; border: 1px solid #bcbebf; border-right: 0; background: #fcfcfc; }
.thead { height: 26px; display: flex; background: linear-gradient(#fcfcfc, #eceded); border-bottom: 1px solid #bcbebf; }
.th { display: flex; align-items: center; border-right: 1px solid #c4c5c6; }
.th-ic { flex: 0 0 47px; padding-left: 3px; }
.th-ic + .th-ic { padding-left: 2px; }
.th-name { flex: 1; padding-left: 2px; border-right: 0; letter-spacing: .5px; }
.ic16 { width: 16px; height: 16px; display: block; }
.ic-lock { width: 15px; height: 15px; }
.trow { display: flex; height: 24px; align-items: center; }
.td-ic { flex: 0 0 47px; padding-left: 3px; }
.td-name { display: flex; align-items: center; padding-left: 3px; }
.td-name b { margin-left: 8px; letter-spacing: .55px; }
.check { width: 14px; height: 14px; border: 1px solid #bfc1c2; background: #fff; border-radius: 1px; position: relative; flex: none; }
.check-on::after {
  content: ""; position: absolute; left: 3px; top: 1px; width: 5px; height: 9px;
  border: solid #232629; border-width: 0 2px 2px 0; transform: rotate(35deg);
}
.ic14 { width: 14px; height: 14px; display: block; flex: none; }
.vsplit { flex: 0 0 8px; background: radial-gradient(#b4b4b4 .6px, transparent .7px) center 3px / 3px 3px no-repeat; }

.scrollarea { flex: 1; display: flex; flex-direction: column; min-height: 0; }
.scrollmain { height: 518px; display: flex; }
.scrollcontent { flex: 0 0 381px; overflow: hidden; height: 518px; padding-left: 17px; }
.sec-h { height: 24px; margin: 8px 0 1px; padding: 0 0 2px 2px; display: flex; align-items: center; font-weight: 700; letter-spacing: .55px; white-space: nowrap; }
.sec-first { margin-top: 12px; }
.grp { width: 420px; border: 1px solid #d6d7d8; border-radius: 2px; background: #ecedee; padding: 13px 0 13px 12px; }
.grp-b { padding: 13px 0 13px 12px; }
.frow { display: flex; align-items: center; }
.lab { letter-spacing: .5px; white-space: nowrap; display: block; }
.lab-block { height: 20px; }
.combo {
  height: 28px; display: flex; align-items: center; padding-left: 5px; flex: none;
  border: 1px solid #bfc1c2; border-radius: 3px; background: linear-gradient(#fcfcfc, #f0f1f1); letter-spacing: .5px;
}
.combo-ref { margin-left: 8px; width: 240px; padding-left: 6px; }
.ic-in { margin-right: 5px; }
.combo-mm { width: 220px; margin-left: 6px; }
.frow-spin { margin-top: 8px; }
.spin {
  width: 180px; height: 28px; display: flex; flex: none;
  border: 1px solid #bfc1c2; border-radius: 3px; background: #fff;
}
.spin-v { flex: 1; padding: 3px 0 0 4px; letter-spacing: .5px; }
.spin-b { flex: 0 0 14px; border-left: 1px solid #c8c9ca; display: flex; flex-direction: column; align-items: center; justify-content: center; gap: 4px; background: #f3f4f4; }
.lab-d { margin-top: 9px; }
.frow-xy { margin-top: 9px; }
.frow-xy .combo-mm { margin-top: -1px; }
.spincol { display: flex; flex-direction: column; gap: 9px; }
.lab-t { margin-top: 8px; }
.inp { height: 28px; padding: 3px 0 0 4px; background: #fff; border: 1px solid #bfc1c2; border-radius: 3px; letter-spacing: .5px; flex: none; }
.inp-full { margin-top: 9px; width: 352px; }
.inp-res { margin-left: 6px; width: 160px; }
.chk { display: flex; align-items: center; height: 20px; gap: 5px; letter-spacing: .5px; line-height: 16px; white-space: nowrap; }
.chk-a { margin-top: 12px; }
.chk-b { margin-top: 14px; }
.vscroll { flex: 0 0 14px; display: flex; flex-direction: column; align-items: center; height: 518px; background: #eff0f1; border-left: 1px solid #d0d1d2; }
.tri-sb { margin: 4px 0; flex: none; }
.vs-thumb { width: 100%; flex: 0 0 204px; background: #fbfbfb; border-bottom: 1px solid #c4c5c6; }
.vs-trough { width: 100%; flex: 1; background: #e6e7e8; }
.hscroll { height: 12px; margin-left: 5px; width: 376px; display: flex; align-items: center; border-top: 1px solid #d0d1d2; padding: 0 4px; }
.hs-thumb { margin-left: 6px; width: 315px; height: 100%; background: #fbfbfb; }
.hs-trough { width: 33px; height: 100%; background: #e4e5e6; margin-right: 4px; }

/* status */
.statusbar { flex: 0 0 36px; display: flex; align-items: center; position: relative; border-top: 1px solid #c0c1c2; }
.st { white-space: nowrap; letter-spacing: .5px; }
.st-x { margin-left: 1208px; width: 110px; }
.st-y { width: 110px; }
.st-p { width: 105px; }
.zoomcombo { width: 279px; height: 29px; display: flex; margin-top: 1px; border: 1px solid #bfc1c2; border-radius: 3px; background: #fff; flex: none; }
.zoomcombo-val { flex: 1; padding: 3px 0 0 3px; letter-spacing: .5px; }
.zoomcombo-arrow { flex: 0 0 20px; border-left: 1px solid #c4c5c6; display: flex; align-items: center; justify-content: center; background: #f3f4f4; }
.slider { width: 98px; height: 5px; margin-left: 8px; position: relative; background: #e4e5e6; border: 1px solid #c4c5c6; border-radius: 3px; flex: none; }
.slider-fill { position: absolute; left: 0; top: 0; width: 8px; height: 3px; background: #5aa9de; }
.slider-thumb { position: absolute; left: 7px; top: -6px; width: 12px; height: 14px; background: #fafafa; border: 1px solid #b5b6b7; border-radius: 4px; }
```

FILE: app.js
```js
(function () {
  var NS = "http://www.w3.org/2000/svg";
  function el(parent, name, attrs, text) {
    var node = document.createElementNS(NS, name);
    for (var k in attrs) node.setAttribute(k, attrs[k]);
    if (text !== undefined) node.textContent = text;
    parent.appendChild(node);
    return node;
  }
  var PX = 2.897;

  // rulers
  var hr = document.getElementById("hruler");
  var vr = document.getElementById("vruler");
  function len(v) { return v % 20 === 0 ? 25 : v % 10 === 0 ? 8 : 5; }
  var d = "";
  for (var v = -100; v <= 405; v += 5) {
    var x = Math.round(362.7 + PX * v) + 0.5;
    d += "M" + x + " 160V" + (160 - len(v));
    if (v % 20 === 0 && x < 1500) el(hr, "text", { "class": "rlabel", x: x + 3, y: 150 }, String(v));
  }
  el(hr, "path", { "class": "rtick", d: d });
  el(hr, "path", { "class": "rmark", d: "M911.5 135V160" });

  d = "";
  var lenV = function (v) { return v % 20 === 0 ? 24 : v % 10 === 0 ? 8 : 5; };
  for (v = -40; v <= 250; v += 5) {
    var y = Math.round(275 + PX * v) + 0.5;
    d += "M64 " + y + "H" + (64 - lenV(v));
    if (v % 20 === 0 && v > -40) el(vr, "text", { "class": "rlabel rlabel-v", transform: "translate(54 " + (y + 4) + ") rotate(-90)" }, String(v));
  }
  el(vr, "path", { "class": "rtick", d: d });
  el(vr, "path", { "class": "rmark", d: "M40 524.5H64" });

  // map: points read in 3x crops with origin (530,340) and (530,600)
  var top = [[280,58],[858,58],[861,68],[852,82],[824,86],[815,110],[818,135],[826,155],[815,180],[811,205],[802,238],[792,268],[762,288],[742,303],[716,345],[712,400],[712,425],[703,435],[712,455],[718,480],[706,505],[692,525],[696,550],[704,580],[700,620],[676,660],[650,690],[626,720],[600,745],[570,775],[530,805],[500,825]];
  var bot = [[495,75],[487,95],[497,115],[490,150],[485,180],[475,215],[470,240],[490,270],[510,310],[540,340],[565,345],[576,365],[560,385],[545,400],[535,432],[515,435],[480,415],[445,420],[440,440],[400,470],[340,520],[284,588],[40,588],[110,490],[190,395],[266,295],[268,265],[240,240],[235,220],[240,190],[215,150],[190,130],[180,110],[185,90],[185,50],[172,35],[195,15],[253,-155],[195,-215]];
  var pts = top.map(function (p) { return (530 + p[0] / 3).toFixed(1) + "," + (340 + p[1] / 3).toFixed(1); })
    .concat(bot.map(function (p) { return (530 + p[0] / 3).toFixed(1) + "," + (600 + p[1] / 3).toFixed(1); }));
  var g = document.getElementById("mapgroup");
  el(g, "polygon", { points: pts.join(" "), fill: "#faeddd", stroke: "#8a8a82", "stroke-width": 1, filter: "url(#mapshadow)" });

  var dots7 = [[793,62,"#1a9a8a"],[664,193,"#335"],[718,262,"#2a8a7a"],[604,253,"#346"],[547,274,"#346"],[661,274,"#2a8a7a"],[583,286,"#346"],[574,304,"#346"],[640,319,"#2a8a7a"],[589,356,"#246"],[475,376,"#246"],[679,385,"#2a9a9a"],[286,211,"#203"],[286,408,"#203"],[271,430,"#203"],[253,469,"#203"],[514,442,"#246"],[247,514,"#203"],[472,508,"#203"],[292,550,"#203"],[319,622,"#203"],[510,632,"#246"],[295,637,"#2a9a9a"],[613,640,"#246"],[349,646,"#2a9a9a"],[355,646,"#2a9a9a"],[289,661,"#2a9a9a"],[328,652,"#2a9a9a"],[493,661,"#246"],[274,670,"#2a9a9a"],[250,676,"#2a9a9a"],[337,673,"#2a9a9a"],[415,676,"#203"],[298,694,"#2a9a9a"],[418,700,"#203"],[322,706,"#203"],[424,712,"#203"],[304,724,"#2a9a9a"],[522,724,"#ec3"],[319,745,"#2a9a9a"],[405,752,"#203"],[409,755,"#203"],[496,763,"#ec3"],[292,781,"#2a9a9a"],[544,775,"#246"],[442,796,"#203"],[463,829,"#ec3"],[406,825,"#203"],[415,824,"#203"],[424,838,"#203"],[430,838,"#203"],[454,847,"#246"],[208,856,"#203"],[448,859,"#246"],[442,874,"#246"]];
  var dots8 = [[394,136,"#246"],[403,133,"#246"],[430,127,"#246"],[430,142,"#246"],[316,139,"#203"],[271,154,"#203"],[454,172,"#203"],[307,198,"#246"],[418,205,"#203"],[421,205,"#203"],[457,217,"#203"],[304,232,"#246"],[277,238,"#246"],[319,241,"#246"],[355,247,"#246"],[463,232,"#246"],[445,259,"#2a9a9a"],[433,289,"#2a9a9a"],[445,286,"#2a9a9a"],[451,283,"#4b6"],[475,278,"#4b6"],[469,290,"#4b6"],[460,292,"#4b6"],[451,310,"#4b6"],[433,328,"#2a9a9a"],[418,310,"#203"],[490,312,"#4b6"],[505,310,"#4b6"],[510,314,"#4b6"],[515,316,"#4b6"],[500,322,"#4b6"],[487,330,"#4b6"],[518,322,"#4b6"],[541,349,"#4b6"],[565,354,"#2a9a9a"],[508,370,"#4b6"],[415,370,"#2a9a9a"],[361,400,"#2a9a9a"],[436,406,"#2a9a9a"],[418,415,"#2a9a9a"],[433,424,"#2a9a9a"],[472,412,"#2a9a9a"],[256,325,"#246"],[262,334,"#246"],[280,328,"#246"],[328,337,"#246"],[229,349,"#2a7a9a"],[202,397,"#2a9a9a"],[319,421,"#2a9a9a"],[235,445,"#2a9a9a"],[250,439,"#2a9a9a"],[169,454,"#2a9a9a"],[298,451,"#2a9a9a"],[298,481,"#2a9a9a"],[75,567,"#2a9a9a"],[118,577,"#2a9a9a"]];
  function addDot(ox, oy, p) {
    el(g, "rect", { x: (ox + p[0] / 3 - 0.5).toFixed(1), y: (oy + p[1] / 3 - 0.5).toFixed(1), width: 1, height: 1, fill: p[2] });
  }
  dots7.forEach(function (p) { addDot(530, 340, p); });
  dots8.forEach(function (p) { addDot(530, 600, p); });

  var m7 = [[388,62],[783,88],[745,108],[784,130],[765,157],[712,160],[297,186],[659,238],[704,294],[702,296],[718,312],[268,312],[683,368],[555,383],[580,405],[232,444],[574,446],[668,451],[558,515],[525,540],[570,540],[238,543],[380,532],[229,579],[479,580],[445,597],[647,587],[645,590],[311,663],[613,695],[450,699],[513,698],[478,713],[476,729],[330,724],[323,726],[257,743],[372,765],[440,765],[481,775],[349,792],[411,788],[397,799],[478,790],[484,795],[484,808],[473,815],[490,806],[515,798],[311,818],[255,833],[361,831],[198,843],[310,850],[251,857],[208,883],[265,889],[304,889],[380,885]];
  var m8 = [[381,105],[226,128],[282,139],[241,153],[343,160],[353,177],[367,194],[450,195],[268,216],[392,220],[408,236],[480,247],[482,263],[303,262],[345,267],[394,274],[487,290],[500,295],[496,293],[315,297],[473,304],[393,313],[389,315],[370,334],[468,330],[466,333],[527,338],[352,356],[460,355],[213,372],[336,377],[253,388],[280,383],[326,400],[227,417],[403,416],[363,428],[333,440],[363,451],[232,459],[271,456],[358,471],[203,484],[285,487],[301,511],[171,513],[238,514],[216,548],[317,549],[215,577],[195,587]];
  function addMarker(ox, oy, p) {
    var cx = ox + p[0] / 3, cy = oy + p[1] / 3;
    el(g, "circle", { cx: cx, cy: cy, r: 3.6, fill: "#f4707c", stroke: "#e8141f", "stroke-width": 1.2 });
    el(g, "circle", { cx: cx, cy: cy, r: 1.9, fill: "#fce4e0", stroke: "none" });
    el(g, "path", { d: "M" + (cx - 1.9) + " " + cy + "h3.8M" + cx + " " + (cy - 1.9) + "v3.8", stroke: "#d8101c", "stroke-width": .9 });
  }
  m7.forEach(function (p) { addMarker(530, 340, p); });
  m8.forEach(function (p) { addMarker(530, 600, p); });
})();
```
